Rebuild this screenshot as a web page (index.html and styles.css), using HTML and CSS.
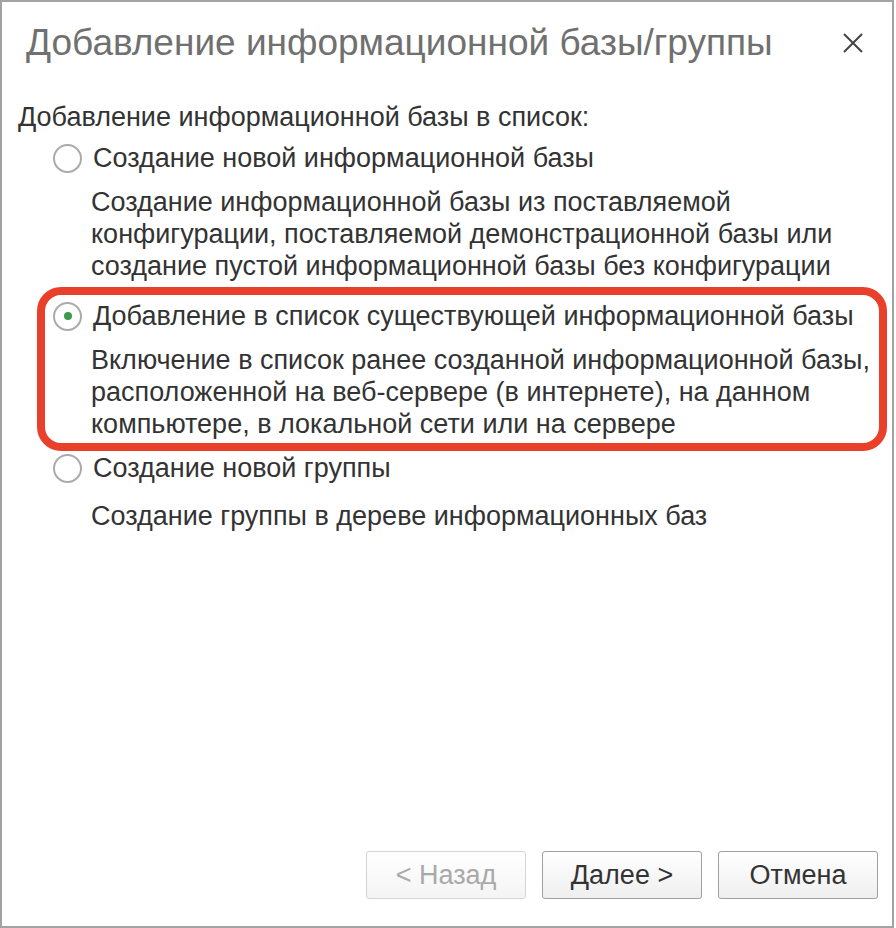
FILE: index.html
```html
<!DOCTYPE html>
<html lang="ru">
<head>
    <meta charset="UTF-8">
    <title>Добавление информационной базы/группы</title>
    <link rel="stylesheet" href="styles.css">
</head>
<body>
    <div class="dialog">
        <div class="header">
            <div class="title">Добавление информационной базы/группы</div>
            <button class="close" title="Закрыть">
                <svg width="20" height="20" viewBox="0 0 20 20">
                    <path d="M1 1 L19 19 M19 1 L1 19" stroke="#444" stroke-width="2" fill="none"/>
                </svg>
            </button>
        </div>

        <div class="content">
            <div class="intro">Добавление информационной базы в список:</div>
            <div class="options">
                <div class="option">
                    <div class="option-label"><span class="radio"></span>Создание новой информационной базы</div>
                    <div class="option-desc">Создание информационной базы из поставляемой<br>конфигурации, поставляемой демонстрационной базы или<br>создание пустой информационной базы без конфигурации</div>
                </div>
                <div class="option marked">
                    <div class="option-label"><span class="radio checked"></span>Добавление в список существующей информационной базы</div>
                    <div class="option-desc">Включение в список ранее созданной информационной базы,<br>расположенной на веб-сервере (в интернете), на данном<br>компьютере, в локальной сети или на сервере</div>
                </div>
                <div class="option">
                    <div class="option-label"><span class="radio"></span>Создание новой группы</div>
                    <div class="option-desc">Создание группы в дереве информационных баз</div>
                </div>
            </div>
        </div>

        <div class="footer">
            <button class="btn" disabled>&lt; Назад</button>
            <button class="btn">Далее &gt;</button>
            <button class="btn">Отмена</button>
        </div>
    </div>
</body>
</html>
```

FILE: styles.css
```css
body {
    margin: 0;
    padding: 0;
    background: #fff;
    font-family: "Liberation Sans", Arial, sans-serif;
    color: #333;
}
.dialog {
    width: 894px;
    height: 928px;
    box-sizing: border-box;
    border: 2px solid #a3a3a3;
    background: #fff;
    display: flex;
    flex-direction: column;
}
.header {
    display: flex;
    justify-content: space-between;
    align-items: center;
    padding: 21px 29px 0 24px;
}
.title {
    font-size: 37px;
    line-height: 40px;
    color: #707070;
    white-space: nowrap;
}
.close {
    border: none;
    background: none;
    padding: 0;
    width: 20px;
    height: 20px;
    display: flex;
}
.content {
    padding: 38px 16px 0 16px;
    font-size: 27px;
    line-height: 32px;
}
.options {
    margin-left: 35px;
    margin-top: 9px;
}
.option {
    margin-bottom: 18px;
}
.option-label {
    display: flex;
    align-items: center;
    white-space: nowrap;
}
.radio {
    width: 25px;
    height: 25px;
    border: 2px solid #ababab;
    border-radius: 50%;
    margin-right: 11px;
    display: flex;
    align-items: center;
    justify-content: center;
    flex-shrink: 0;
}
.radio.checked::after {
    content: "";
    width: 8px;
    height: 8px;
    border-radius: 50%;
    background: #3d9a4b;
}
.option-desc {
    margin-top: 12px;
    margin-left: 38px;
    white-space: nowrap;
}
.option:last-child .option-desc {
    margin-top: 16px;
}
.option.marked {
    margin: -13px -11px 1px -16px;
    padding: 5px 8px 3px 8px;
    border: 8px solid #e8402a;
    border-radius: 24px;
}
.footer {
    margin-top: auto;
    display: flex;
    justify-content: flex-end;
    gap: 16px;
    padding: 0 14px 27px 0;
}
.btn {
    width: 160px;
    height: 48px;
    font-family: "Liberation Sans", Arial, sans-serif;
    font-size: 27px;
    color: #333;
    border: 1px solid #a0a0a0;
    border-radius: 3px;
    background: linear-gradient(#ffffff, #efefef);
}
.btn:disabled {
    color: #a9a9a9;
    border-color: #d4d4d4;
    background: linear-gradient(#ffffff, #f4f4f4);
}
```
